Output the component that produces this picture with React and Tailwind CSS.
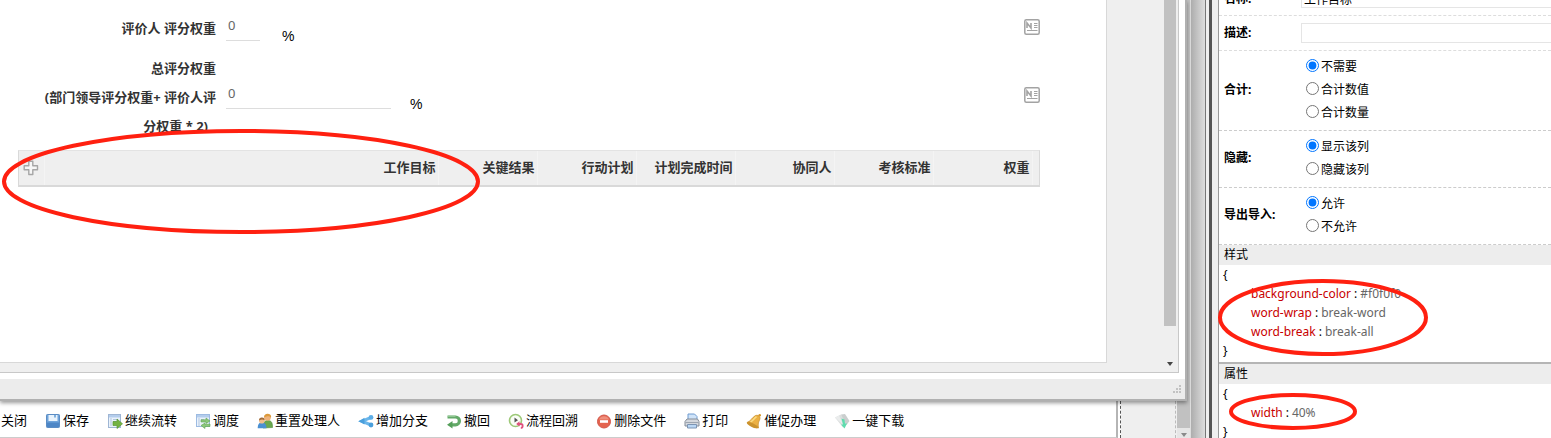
import React, { useState } from 'react';

const toolbarItems = [
    { name: 'save', label: '保存' },
    { name: 'forward', label: '继续流转' },
    { name: 'dispatch', label: '调度' },
    { name: 'users', label: '重置处理人' },
    { name: 'branch', label: '增加分支' },
    { name: 'undo', label: '撤回' },
    { name: 'trace', label: '流程回溯' },
    { name: 'remove', label: '删除文件' },
    { name: 'print', label: '打印' },
    { name: 'remind', label: '催促办理' },
    { name: 'download', label: '一键下载' },
];

const columns = ['工作目标', '关键结果', '行动计划', '计划完成时间', '协同人', '考核标准', '权重'];

const radioGroups = [
    { name: 'total', label: '合计:', options: ['不需要', '合计数值', '合计数量'] },
    { name: 'hidden', label: '隐藏:', options: ['显示该列', '隐藏该列'] },
    { name: 'transfer', label: '导出导入:', options: ['允许', '不允许'] },
];

const styleRules = [
    { key: 'background-color', value: '#f0f0f0' },
    { key: 'word-wrap', value: 'break-word' },
    { key: 'word-break', value: 'break-all' },
];

const attrRules = [{ key: 'width', value: '40%' }];

const iconShapes = {
    save: (
        <>
            <rect x="1.5" y="1.5" width="13" height="13" rx=".8" fill="#6fa3da" stroke="#5a8cc4" />
            <path d="M2 9.500h12v4.500H2z" fill="#4d86c6" />
            <rect x="3.5" y="2" width="9" height="6" fill="#e9f3fc" />
            <path d="M9 2h2v2.500H9z" fill="#7fb0de" />
        </>
    ),
    forward: (
        <>
            <rect x="1.500" y="1.500" width="12" height="13" fill="#eaf2fb" stroke="#9fb6d4" />
            <path d="M2 2h11v2.500H2z" fill="#b4cdec" />
            <path d="M4 5v8M6 6.500h5M6 8.500h3" stroke="#b3c7e0" />
            <path d="M6 8.500h4V6l5.500 4.800L10 15.500v-3H6z" fill="#74b343" stroke="#5a9a35" strokeWidth=".7" />
        </>
    ),
    dispatch: (
        <>
            <rect x="1.500" y="1.500" width="13" height="12" fill="#eaf2fb" stroke="#9dbbe2" />
            <path d="M2 2h12v2.500H2z" fill="#b4cdec" />
            <path d="M4 5v8M6 6.500h3" stroke="#b3c7e0" />
            <path d="M6 9V6.800h5V5l4 3-4 2.500V9z" fill="#8cc87a" stroke="#5fa554" strokeWidth=".6" />
            <path d="M15 11v2.500h-5v2L6 12.500l4-2.500v1.500z" fill="#8cc87a" stroke="#5fa554" strokeWidth=".6" />
        </>
    ),
    users: (
        <>
            <path d="M6 15c0-5 1-7.500 5-7.500s4.500 3 4.500 7z" fill="#6aa84f" stroke="#528c3a" strokeWidth=".6" />
            <circle cx="10.500" cy="4.500" r="3.300" fill="#efb37a" />
            <path d="M7 4.500C7 1.500 9 .5 11 .7c2.500.2 3.500 2 3 4.300-1-2-3-2.500-7-.5z" fill="#dc9a3c" />
            <path d="M.7 15.300c0-4 1.300-5.800 4.300-5.800s4.500 2 4.500 5.800z" fill="#4a90d2" />
            <circle cx="4.800" cy="7.800" r="2.800" fill="#f1bd8c" />
            <path d="M2 7.500c0-2.500 1.500-3.200 3-3 1.800 0 3 1 2.500 3-1.500-1.300-3-1.300-5.500 0z" fill="#a06c3a" />
        </>
    ),
    branch: (
        <>
            <path d="M13 4.500L4 8.200 13 12" fill="none" stroke="#6bb6ea" strokeWidth="3" />
            <path d="M.5 8.200L6.500 4.800v6.800z" fill="#4a9fdc" />
            <circle cx="13" cy="4.400" r="2.400" fill="#5cade6" />
            <circle cx="13" cy="12" r="2.400" fill="#4a9fdc" />
        </>
    ),
    undo: (
        <>
            <path d="M1.500 4H9.500a3.800 3.800 0 010 7.800H5" fill="none" stroke="#63a968" strokeWidth="3.200" />
            <path d="M6.500 8v7.500L1 11.800z" fill="#559f5a" />
            <path d="M2 3.300h7.500" stroke="#9bcd9b" />
        </>
    ),
    trace: (
        <>
            <circle cx="7.500" cy="7.500" r="6" fill="#fafdf7" stroke="#9dc978" strokeWidth="1.600" />
            <path d="M6.500 4.500L10 7.200 6.500 9.500z" fill="#555" />
            <path d="M9.500 11h3.300c2.500 0 2.500 3.800 0 3.800" fill="none" stroke="#e0527e" strokeWidth="1.800" />
            <path d="M11.500 8.300v5.200L8.200 11z" fill="#e0527e" />
        </>
    ),
    remove: (
        <>
            <circle cx="8" cy="8.500" r="6.500" fill="#e4644f" stroke="#d3574a" />
            <path d="M3 6.500a5.500 5.500 0 0110 0z" fill="#ef8f7d" />
            <path d="M4 7.200h8v2.600H4z" fill="#fff" />
        </>
    ),
    print: (
        <>
            <path d="M4 7V1h6.500L13 3.500V7z" fill="#cfe3f8" stroke="#6f9bd0" />
            <path d="M1 8.500L3 6h10.500L15 8.500V13H1z" fill="#d4d8de" stroke="#858d98" />
            <path d="M1.500 9.500h13" stroke="#9da5b0" />
            <path d="M3.500 11.500h9V15h-9z" fill="#b9d6f4" stroke="#7c95b4" />
        </>
    ),
    remind: (
        <>
            <path d="M1 9.500C5 8 6 4.500 9.500 2.500c3.500-1 5.500 2 4 4.500-1.500 3-1.500 5-1 8z" fill="#ebb043" stroke="#c58a26" strokeWidth=".7" />
            <path d="M4.500 9C8 7 8 5 10.500 3.800" fill="none" stroke="#fbdc83" strokeWidth="1.600" />
            <ellipse cx="6.500" cy="12.200" rx="6.300" ry="1.900" transform="rotate(25 6.500 12.200)" fill="#cb922c" />
            <circle cx="13.700" cy="2.300" r="1.300" fill="#d7992a" />
        </>
    ),
    download: (
        <>
            <path d="M1 4.500l6-3 7 8-5 5z" fill="#dcdfdf" />
            <path d="M1 4.500l4-2 4 9z" fill="#ebeded" />
            <path d="M7 1.500L11 1l4.500 7-3 4z" fill="#cacece" />
            <path d="M7.500 5.500l3 1 .5 4h2l-2.500 5-3.500-4h2z" fill="#5fdcae" />
        </>
    ),
};

const ToolIcon = ({ name }) => (
    <svg viewBox="0 0 16 16" className="h-4 w-4 shrink-0" aria-hidden="true">
        {iconShapes[name]}
    </svg>
);

const NoteIcon = () => (
    <svg viewBox="0 0 16 16" className="h-4 w-4" fill="none" stroke="#a3a3a3" aria-hidden="true">
        <rect x=".8" y=".8" width="14.400" height="14.400" rx="1.500" strokeWidth="1.500" />
        <path d="M3 9V4l4 5V4" strokeWidth="1.600" />
        <path d="M10 4.500h3.500M10 6.500h3.500M10 8.500h3.500M3 11.500h10.500" />
    </svg>
);

const PlusIcon = () => (
    <svg viewBox="0 0 16 16" className="h-4 w-4" fill="#f6f6f6" stroke="#a6a6a6" strokeWidth="1.400" aria-hidden="true">
        <path d="M5.800 1.200h4v4.600h4.700v4H9.800v4.700h-4V9.800H1.200v-4h4.600z" strokeLinejoin="round" />
    </svg>
);

// red marker ring laid over the content
const Ring = ({ className, w, h }) => (
    <svg className={`pointer-events-none absolute z-20 ${className}`} width={w} height={h} aria-hidden="true">
        <ellipse cx={w / 2} cy={h / 2} rx={w / 2 - 2} ry={h / 2 - 2} fill="none" stroke="#ff2010" strokeWidth="4" />
    </svg>
);

const RuleBlock = ({ title, rules, children }) => (
    <section className="relative">
        <h3 className="h-5 bg-[#ededed] pl-[5px] leading-5">{title}</h3>
        <div className="pb-px pl-1 leading-[19px]">
            <div>{'{'}</div>
            {rules.map((rule) => (
                <div key={rule.key} className="pl-7 text-[#666]">
                    <span className="text-[#c80000]">{rule.key}</span>
                    <span className="px-[3px] text-black">:</span>
                    {rule.value}
                </div>
            ))}
            <div>{'}'}</div>
        </div>
        {children}
    </section>
);

const EvaluationForm = () => {
    const [weight, setWeight] = useState('0');
    const [total, setTotal] = useState('0');

    return (
        <div className="relative min-w-0 flex-1 border-r border-b border-[#d8d8d8] bg-white pr-[66px] pl-[18px]">
            <div className="flex h-[54px] items-start">
                <label htmlFor="weight" className="w-[198px] pt-[14px] text-right font-bold leading-[29px]">
                    评价人 评分权重
                </label>
                <input
                    id="weight"
                    value={weight}
                    onChange={(e) => setWeight(e.target.value)}
                    className="mt-[11px] ml-[10px] h-[30px] w-[34px] border-b border-[#ddd] px-0.5 pb-0.5 text-[#666] outline-none"
                />
                <span className="mt-[26px] ml-[22px] font-['Liberation_Sans',sans-serif] text-sm text-black">%</span>
                <button type="button" aria-label="备注" className="mt-[19px] ml-auto">
                    <NoteIcon />
                </button>
            </div>
            <div className="flex items-start">
                <label htmlFor="total" className="w-[198px] text-right font-bold leading-[29px]">
                    总评分权重
                    <br />
                    (部门领导评分权重+ 评价人评
                    <br />
                    <span className="pr-2">分权重 * 2)</span>
                </label>
                <input
                    id="total"
                    value={total}
                    onChange={(e) => setTotal(e.target.value)}
                    className="mt-[25px] ml-[10px] h-[30px] w-[165px] border-b border-[#ddd] px-0.5 pb-0.5 text-[#666] outline-none"
                />
                <span className="mt-10 ml-[19px] font-['Liberation_Sans',sans-serif] text-sm text-black">%</span>
                <button type="button" aria-label="备注" className="mt-[33px] ml-auto">
                    <NoteIcon />
                </button>
            </div>
            <div className="mt-[9px] border border-b-2 border-[#d9d9d9] border-t-[#e3e3e3] bg-[#efefef]">
                <table className="w-full table-fixed">
                    <colgroup>
                        <col className="w-[25px]" />
                        <col />
                        <col className="w-[99px]" span="6" />
                        <col className="w-[7px]" />
                    </colgroup>
                    <thead>
                        <tr className="h-[34px]">
                            <th className="border-r border-[#f4f4f4] pl-1 align-middle">
                                <button type="button" aria-label="新增" className="block">
                                    <PlusIcon />
                                </button>
                            </th>
                            {columns.map((col) => (
                                <th key={col} className="border-r border-[#f4f4f4] pr-0.5 text-right font-bold whitespace-nowrap">
                                    {col}
                                </th>
                            ))}
                            <th></th>
                        </tr>
                    </thead>
                </table>
            </div>
            <Ring className="top-[129px] left-[2px]" w={478} h={105} />
        </div>
    );
};

const Dialog = () => (
    <div className="relative z-10 flex min-w-0 flex-1 flex-col border-r-2 border-b-2 border-[#b0b0b0] bg-white text-[#333] shadow-[0_2px_4px_rgba(0,0,0,0.4)]">
        <div className="mr-1.5 mb-1.5 flex flex-1 border-r border-b border-[#c8c8c8] bg-[#efefef]">
            <div className="flex min-w-0 flex-1 pb-[9px]">
                <EvaluationForm />
            </div>
            <div className="ml-[57px] flex w-[14px] flex-col items-start justify-between pb-1.5">
                <div className="mb-9 w-3 flex-1 bg-[#c1c1c1]"></div>
                <svg viewBox="0 0 12 4" className="h-1 w-3" aria-hidden="true">
                    <path d="M3 0h6L6 4z" fill="#444" />
                </svg>
            </div>
        </div>
        <div className="flex h-5 items-center justify-end bg-[#ececec] pr-1">
            <svg viewBox="0 0 9 9" className="h-[9px] w-[9px]" fill="#c2c2c2" aria-hidden="true">
                <path d="M7 0h2v2H7zM4 3h2v2H4zM7 3h2v2H7zM1 6h2v2H1zM4 6h2v2H4zM7 6h2v2H7z" />
            </svg>
        </div>
    </div>
);

const Toolbar = () => (
    <div className="flex h-[37px] bg-[#efefef]">
        <div className="flex min-w-0 flex-1 items-center gap-[18px] border-r-2 border-b border-r-[#b5b5b5] border-b-[#ccc] bg-white pt-1 pl-px whitespace-nowrap text-black">
            <button type="button">关闭</button>
            {toolbarItems.map((item) => (
                <button key={item.name} type="button" className="flex items-center gap-0.5">
                    <ToolIcon name={item.name} />
                    {item.label}
                </button>
            ))}
        </div>
        <div className="w-[3px] border-r border-dashed border-[#555] bg-white"></div>
        <div className="mr-px w-[55px] border-r border-dashed border-[#bbb]"></div>
        <div className="flex w-[13px] flex-col items-center bg-[#e6e6e6] pb-px">
            <div className="w-full flex-1 bg-[#c1c1c1]"></div>
            <svg viewBox="0 0 12 4" className="mt-[5px] h-1 w-3" aria-hidden="true">
                <path d="M3 0h6L6 4z" fill="#8a8a8a" />
            </svg>
        </div>
    </div>
);

const PropertyPanel = () => {
    const [title, setTitle] = useState('工作目标');
    const [desc, setDesc] = useState('');

    return (
        <aside className="w-[332px] shrink-0 bg-white text-xs text-black">
            {/* scrolled list, first row is partly out of view */}
            <div className="-mt-[19px] flex h-[35px] items-center border-b border-dashed border-[#ddd] pl-[5px]">
                <label htmlFor="title" className="w-[77px] pt-0.5 font-bold">名称:</label>
                <input
                    id="title"
                    value={title}
                    onChange={(e) => setTitle(e.target.value)}
                    className="h-5 min-w-0 flex-1 border border-r-0 border-[#e5e5e5] px-0.5 pt-0.5 outline-none"
                />
            </div>
            <div className="flex h-[35px] items-center border-b border-dashed border-[#ddd] pl-[5px]">
                <label htmlFor="desc" className="w-[77px] font-bold">描述:</label>
                <input
                    id="desc"
                    value={desc}
                    onChange={(e) => setDesc(e.target.value)}
                    className="h-5 min-w-0 flex-1 border border-r-0 border-[#e5e5e5] px-0.5 pt-0.5 outline-none"
                />
            </div>
            {radioGroups.map((group) => (
                <div
                    key={group.name}
                    role="radiogroup"
                    aria-label={group.label}
                    className="flex items-center border-b border-dashed border-[#ccc] pt-[3px] pb-[7px] pl-[5px]"
                >
                    <span className="w-[77px] pt-0.5 font-bold">{group.label}</span>
                    <div className="pl-[5px]">
                        {group.options.map((option, i) => (
                            <label key={option} className="flex h-[23px] items-center gap-0.5">
                                <input type="radio" name={group.name} defaultChecked={i === 0} className="h-[13px] w-[13px]" />
                                <span className="pt-0.5">{option}</span>
                            </label>
                        ))}
                    </div>
                </div>
            ))}
            <RuleBlock title="样式" rules={styleRules}>
                <Ring className="top-[34px] -left-px" w={210} h={77} />
            </RuleBlock>
            <div className="mt-px border-t-2 border-[#b5b5b5]">
                <RuleBlock title="属性" rules={attrRules}>
                    <Ring className="top-[29px] left-2.5" w={128} h={37} />
                </RuleBlock>
            </div>
        </aside>
    );
};

const App = () => {
    return (
        <div className="flex h-screen overflow-hidden bg-[#efefef] font-['Noto_Sans','Noto_Sans_CJK_SC',sans-serif] text-[13px]">
            <div className="flex min-w-0 flex-1 flex-col">
                <div className="flex min-h-0 flex-1 bg-[#c1c1c1] pr-[3px]">
                    <Dialog />
                </div>
                <Toolbar />
            </div>
            {/* window frame and splitter */}
            <div className="w-4 border-r border-l border-r-[#777] border-l-[#ddd] bg-linear-to-r from-[#adadad] to-[#dedede]"></div>
            <div className="w-[13px] border-r border-[#999] pl-[3px]">
                <div className="h-full w-[3px] bg-[#555]"></div>
            </div>
            <PropertyPanel />
        </div>
    );
};

export default App;
